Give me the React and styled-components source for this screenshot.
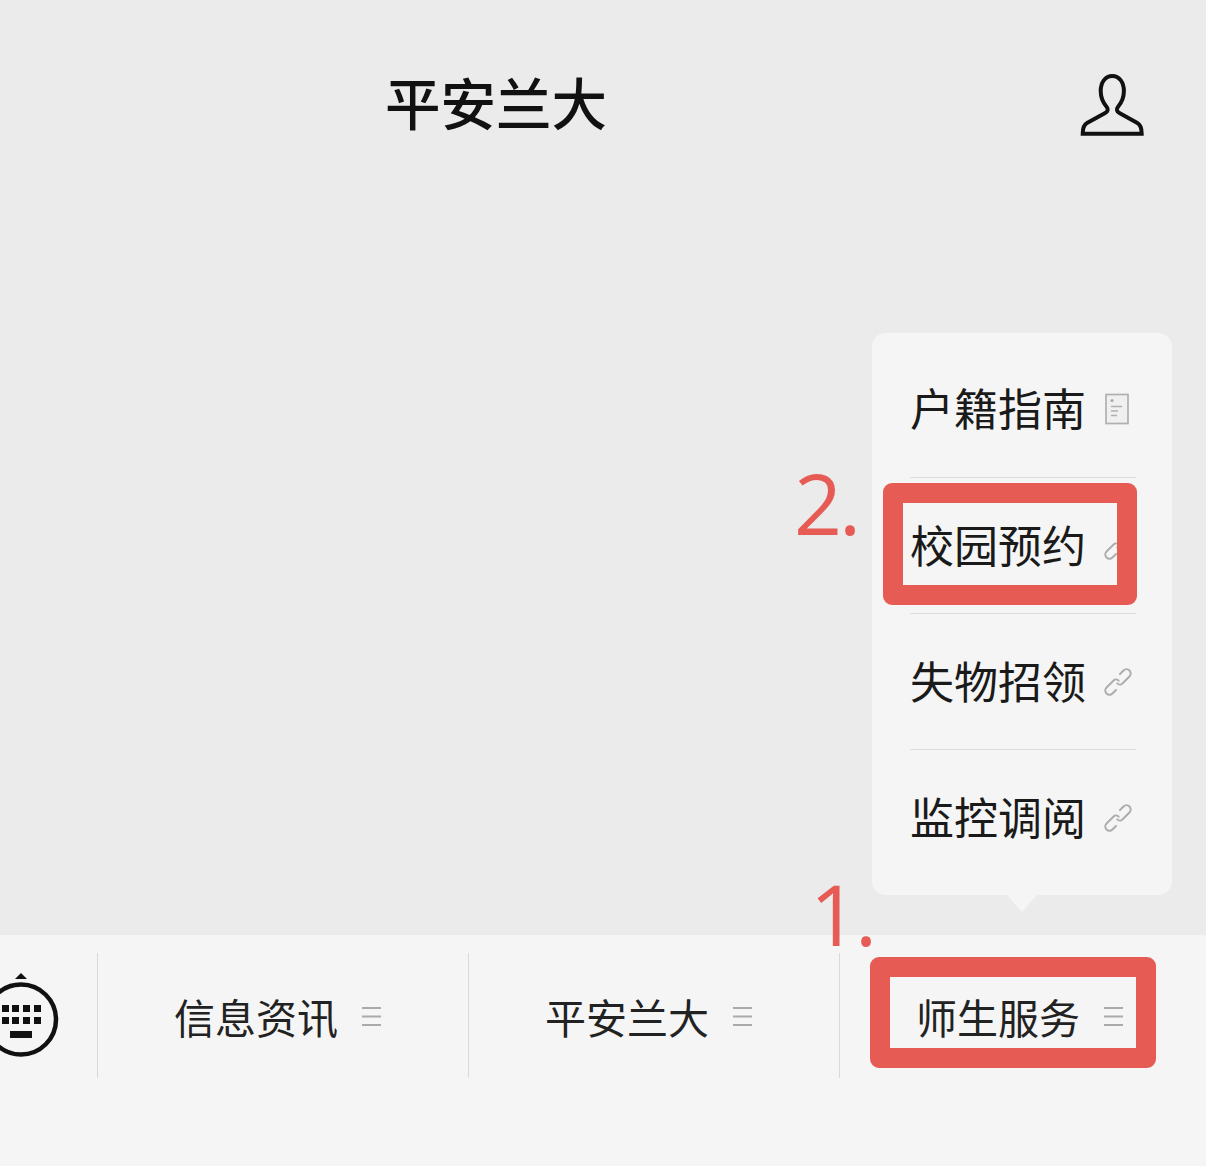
import React from 'react'
import styled, { createGlobalStyle } from 'styled-components'

const GlobalStyle = createGlobalStyle`
  html, body {
    margin: 0;
    padding: 0;
    background: #ebebeb;
  }
  body {
    font-family: "Noto Sans CJK SC", "Noto Sans", sans-serif;
    overflow: hidden;
  }
`

const menuItems = [
  { label: '户籍指南', icon: 'doc' },
  { label: '校园预约', icon: 'link', marked: true },
  { label: '失物招领', icon: 'link' },
  { label: '监控调阅', icon: 'link' }
]

const tabs = [
  { label: '信息资讯' },
  { label: '平安兰大' },
  { label: '师生服务', marked: true }
]

const UserGlyph = () => (
  <UserSvg viewBox="0 0 64 64">
    <path d="M32.3 3C25.500 3 20.700 9 20.700 18c0 7.500 3 12.500 6 16 1.800 2.200 1.200 4.600-1.500 6L7 50c-3.200 1.800-4.300 5.500-4.300 10.700h59c0-5.200-1.100-8.900-4.300-10.700L39.400 40c-2.700-1.400-3.300-3.800-1.500-6 3-3.500 6-8.500 6-16C43.900 9 39.100 3 32.300 3z" />
  </UserSvg>
)

const DocGlyph = () => (
  <DocSvg viewBox="0 0 26 32">
    <rect x="2" y="1.500" width="22" height="29" />
    <circle cx="8" cy="7.500" r="1.600" fill="#aaa" stroke="none" />
    <path d="M7 13.500h11M7 18h7M7 22.500h6" />
  </DocSvg>
)

const ChainGlyph = () => (
  <ChainSvg viewBox="0 0 28 28">
    <g transform="rotate(-45 14 14)">
      <path d="M15.500 13.500c0-2-1.500-3.700-3.500-3.700H2a4.200 4.200 0 0 0 0 8.400h5" />
      <path d="M12.500 14.500c0 2 1.500 3.700 3.500 3.700h10a4.200 4.200 0 0 0 0-8.400h-5" />
    </g>
  </ChainSvg>
)

const MenuGlyph = () => (
  <MenuSvg viewBox="0 0 20 20">
    <path d="M0 2h19M0 10.500h19M0 19h19" />
  </MenuSvg>
)

const KeyboardGlyph = () => (
  <KeyboardSvg viewBox="0 0 60 88">
    <path d="M15 7l6-6 6 6z" fill="#111" stroke="none" />
    <circle cx="21" cy="47.500" r="35" />
    <g fill="#111" stroke="none">
      {[2, 12, 23, 34].map(x => (
        <React.Fragment key={x}>
          <rect x={x} y="33" width="7" height="7" />
          <rect x={x} y="45" width="7" height="7" />
        </React.Fragment>
      ))}
      <rect x="10" y="59" width="22" height="7" />
    </g>
  </KeyboardSvg>
)

const App = () => (
  <Page>
    <GlobalStyle />
    <Header>
      <Title>平安兰大</Title>
      <UserGlyph />
    </Header>
    <Main>
      <Popup>
        {menuItems.map(({ label, icon, marked }) => (
          <MenuItem key={label}>
            <MenuLabel>{label}</MenuLabel>
            {icon === 'doc' ? <DocGlyph /> : <ChainGlyph />}
            {marked && (
              <>
                <MenuHighlight />
                <MenuNumber>2.</MenuNumber>
              </>
            )}
          </MenuItem>
        ))}
      </Popup>
    </Main>
    <TabBar>
      <KeyboardSlot>
        <KeyboardGlyph />
      </KeyboardSlot>
      {tabs.map(({ label, marked }) => (
        <Tab key={label}>
          <TabLabel>{label}</TabLabel>
          <MenuGlyph />
          {marked && (
            <>
              <TabHighlight />
              <TabNumber>1.</TabNumber>
            </>
          )}
        </Tab>
      ))}
    </TabBar>
  </Page>
)

const Page = styled.div`
  width: 1206px;
  height: 1166px;
  display: flex;
  flex-direction: column;
  overflow: hidden;
  background: #ebebeb;
`

const Header = styled.header`
  height: 210px;
  flex: none;
  display: flex;
  align-items: center;
  justify-content: space-between;
  padding: 0 62px 0 385px;
  box-sizing: border-box;
`

const Title = styled.h1`
  margin: 0 0 7px;
  font-size: 55.500px;
  font-weight: 500;
  line-height: 1;
  color: #111;
`

const UserSvg = styled.svg`
  width: 64px;
  height: 64px;
  fill: none;
  stroke: #111;
  stroke-width: 4;
`

const Main = styled.main`
  height: 725px;
  flex: none;
  display: flex;
  justify-content: flex-end;
  align-items: flex-start;
  padding: 123px 34px 0 0;
  box-sizing: border-box;
`

const Popup = styled.div`
  position: relative;
  width: 300px;
  height: 562px;
  box-sizing: border-box;
  padding: 8px 36px 10px 38px;
  background: #f5f5f5;
  border-radius: 14px;

  &::after {
    content: '';
    position: absolute;
    left: 135px;
    bottom: -17px;
    border-left: 15px solid transparent;
    border-right: 15px solid transparent;
    border-top: 17px solid #f5f5f5;
  }
`

const MenuItem = styled.div`
  position: relative;
  height: 136px;
  box-sizing: border-box;
  display: flex;
  align-items: center;
  justify-content: space-between;
  padding-right: 4px;

  & + & {
    border-top: 1px solid #dedede;
  }
`

const MenuLabel = styled.span`
  font-size: 44px;
  line-height: 1;
  margin-bottom: 4px;
  color: #1a1a1a;
`

const ChainSvg = styled.svg`
  width: 28px;
  height: 28px;
  overflow: visible;
  fill: none;
  stroke: #adadad;
  stroke-width: 2;
  stroke-linecap: round;
`

const DocSvg = styled.svg`
  width: 26px;
  height: 32px;
  margin-right: 2px;
  fill: #f0f0f0;
  stroke: #b0b0b0;
  stroke-width: 1.700;
`

const Highlight = styled.div`
  position: absolute;
  box-sizing: border-box;
  border: 20px solid #e65c55;
  border-radius: 9px;
`

const MenuHighlight = styled(Highlight)`
  left: -27px;
  right: -1px;
  top: 5px;
  bottom: 8px;
`

const TabHighlight = styled(Highlight)`
  left: 30px;
  top: 4px;
  width: 286px;
  height: 111px;
`

const AnnotationNumber = styled.span`
  position: absolute;
  font-family: "Open Sans", sans-serif;
  font-size: 84px;
  font-weight: 500;
  letter-spacing: -3px;
  line-height: 1;
  color: #e65c55;
`

const MenuNumber = styled(AnnotationNumber)`
  left: -116px;
  top: -17px;
`

const TabNumber = styled(AnnotationNumber)`
  left: -30px;
  top: -81px;
`

const TabBar = styled.nav`
  height: 231px;
  flex: none;
  display: flex;
  align-items: flex-start;
  padding-top: 18px;
  box-sizing: border-box;
  background: #f5f5f5;
`

const KeyboardSlot = styled.div`
  width: 97px;
  height: 125px;
  flex: none;
  overflow: hidden;
`

const KeyboardSvg = styled.svg`
  display: block;
  width: 60px;
  height: 88px;
  margin-top: 19px;
  overflow: visible;
  fill: none;
  stroke: #111;
  stroke-width: 4.500;
`

const Tab = styled.div`
  position: relative;
  width: 371px;
  height: 125px;
  flex: none;
  box-sizing: border-box;
  border-left: 1px solid #d9d9d9;
  display: flex;
  align-items: center;
  gap: 24px;
  padding-left: 76px;
  padding-top: 1px;
`

const TabLabel = styled.span`
  font-size: 41px;
  line-height: 1;
  color: #222;
`

const MenuSvg = styled.svg`
  width: 20px;
  height: 20px;
  fill: none;
  stroke: #aaa;
  stroke-width: 2;
`

export default App
